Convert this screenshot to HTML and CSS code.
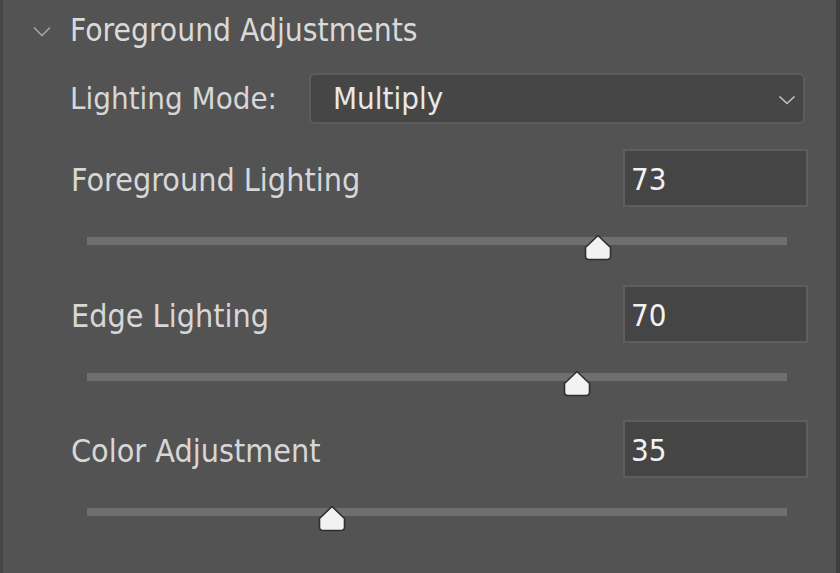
FILE: index.html
```html
<!DOCTYPE html>
<html>
<head>
<meta charset="utf-8">
<link rel="stylesheet" href="styles.css">
</head>
<body>
<div class="panel">
  <div class="header">
    <svg class="caret" width="18" height="11" viewBox="0 0 18 11"><path d="M1 1.5 L9 9.5 L17 1.5" fill="none" stroke="#a3a3a3" stroke-width="1.6"/></svg>
    <span class="title">Foreground Adjustments</span>
  </div>
  <div class="content">
    <div class="mode-row">
      <span class="mode-label">Lighting Mode:</span>
      <div class="select">
        <span class="select-text">Multiply</span>
        <svg class="select-caret" width="18" height="10" viewBox="0 0 18 10"><path d="M1.5 1.5 L9 8.5 L16.5 1.5" fill="none" stroke="#c4c4c4" stroke-width="1.6"/></svg>
      </div>
    </div>
    <div class="groups">
      <div class="group">
        <div class="row">
          <span class="label">Foreground Lighting</span>
          <div class="num">73</div>
        </div>
        <div class="track">
          <svg class="thumb" style="left: calc(73% - 14px)" width="28" height="27" viewBox="0 0 28 27"><path d="M14 1.5 L26.5 13.5 V22 Q26.5 25.5 23 25.5 H5 Q1.5 25.5 1.5 22 V13.5 Z" fill="#f2f2f2" stroke="#2e2e2e" stroke-width="1.6" stroke-linejoin="round"/></svg>
        </div>
      </div>
      <div class="group">
        <div class="row">
          <span class="label">Edge Lighting</span>
          <div class="num">70</div>
        </div>
        <div class="track">
          <svg class="thumb" style="left: calc(70% - 14px)" width="28" height="27" viewBox="0 0 28 27"><path d="M14 1.5 L26.5 13.5 V22 Q26.5 25.5 23 25.5 H5 Q1.5 25.5 1.5 22 V13.5 Z" fill="#f2f2f2" stroke="#2e2e2e" stroke-width="1.6" stroke-linejoin="round"/></svg>
        </div>
      </div>
      <div class="group">
        <div class="row">
          <span class="label">Color Adjustment</span>
          <div class="num">35</div>
        </div>
        <div class="track">
          <svg class="thumb" style="left: calc(35% - 14px)" width="28" height="27" viewBox="0 0 28 27"><path d="M14 1.5 L26.5 13.5 V22 Q26.5 25.5 23 25.5 H5 Q1.5 25.5 1.5 22 V13.5 Z" fill="#f2f2f2" stroke="#2e2e2e" stroke-width="1.6" stroke-linejoin="round"/></svg>
        </div>
      </div>
    </div>
  </div>
</div>
</body>
</html>
```

FILE: styles.css
```css
html, body {
  margin: 0;
  padding: 0;
  background: #535353;
}

.panel {
  width: 840px;
  height: 573px;
  box-sizing: border-box;
  border-left: 3px solid #464646;
  border-right: 4px solid #3e3e3e;
  background: #535353;
  font-family: "DejaVu Sans Condensed", "DejaVu Sans", sans-serif;
  font-stretch: condensed;
  color: #d7d7d7;
  overflow: hidden;
}

.header {
  height: 62px;
  display: flex;
  align-items: center;
  padding-left: 30px;
}

.caret {
  display: block;
  margin-right: 19px;
}

.title {
  font-size: 31.5px;
  color: #dadada;
  line-height: 1;
}

.content {
  padding-left: 67px;
  padding-right: 28px;
}

.mode-row {
  margin-top: 11px;
  height: 51px;
  display: flex;
  align-items: center;
}

.mode-label {
  width: 239px;
  font-size: 31px;
  line-height: 1;
}

.select {
  width: 496px;
  height: 51px;
  box-sizing: border-box;
  background: #464646;
  border: 2px solid #5c5c5c;
  border-radius: 6px;
  display: flex;
  align-items: center;
  justify-content: space-between;
  padding-left: 22px;
  padding-right: 7px;
}

.select-text {
  font-size: 31px;
  color: #e8e8e8;
  line-height: 1;
}

.select-caret {
  display: block;
  margin-top: 3px;
}

.groups {
  margin-top: 25px;
  display: flex;
  flex-direction: column;
  gap: 39.5px;
}

.row {
  height: 58px;
  display: flex;
  align-items: center;
  justify-content: space-between;
  padding-left: 1px;
}

.label {
  font-size: 32px;
  line-height: 1;
  padding-top: 4px;
}

.num {
  width: 185px;
  height: 58px;
  box-sizing: border-box;
  background: #454545;
  border: 2px solid #5e5e5e;
  display: flex;
  align-items: center;
  padding-left: 6px;
  padding-top: 2px;
  font-size: 31px;
  color: #f2f2f2;
}

.track {
  position: relative;
  margin-top: 30px;
  margin-left: 17px;
  width: 700px;
  height: 8px;
  background: #6f6f6f;
}

.thumb {
  position: absolute;
  top: -3px;
  display: block;
}
```
